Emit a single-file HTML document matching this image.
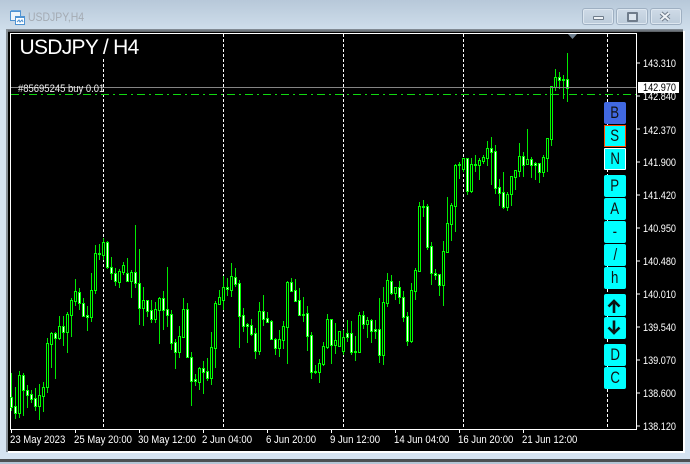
<!DOCTYPE html>
<html><head><meta charset="utf-8"><style>
html,body{margin:0;padding:0}
body{width:690px;height:464px;overflow:hidden;position:relative;background:#d5e3f1;font-family:"Liberation Sans",sans-serif}
div{position:absolute}
.top{left:0;top:0;width:690px;height:30px;background:linear-gradient(#b7c8d9,#cfdeeb)}
.tt{left:28px;top:10px;font-size:12px;line-height:14px;color:#a4abb3;white-space:nowrap;transform:scaleX(.87);transform-origin:left}
.wb{top:8px;height:15px;border:1px solid #9fb0c2;border-radius:3px;background:linear-gradient(#cfdbe7,#bccbda);box-shadow:inset 0 0 0 1px #dde7f0}
.blk{left:8px;top:32px;width:675px;height:419px;background:#000}
.b{left:604px;width:22px;height:22px;background:#0ff;border-radius:2px;color:#111;font-size:17px;line-height:22px;text-align:center;box-sizing:border-box}
.b span{display:inline-block;transform:scaleX(.78)}
.p{left:643px;color:#fff;font-size:11px;line-height:12px;white-space:nowrap;transform:scaleX(.83);transform-origin:left}
.d{top:434px;color:#fff;font-size:11px;line-height:12px;white-space:nowrap;transform:scaleX(.87);transform-origin:left}
svg{position:absolute;left:0;top:0}
</style></head><body>
<div class="top"></div>
<svg width="690" height="464" shape-rendering="crispEdges">
<path d="M11 10h10v3H11z" fill="#6aa5dc"/><path d="M10.5 11.5h10v9h-10z" fill="#eef5fb" stroke="#4f93d2"/>
<path d="M15.5 16.5h9v8h-9z" fill="#fff" stroke="#4f93d2"/><path d="M16 16h9v2h-9z" fill="#4f93d2"/>
<path d="M17 22l2-2 1 2 2-2 1 2" fill="none" stroke="#4f93d2" shape-rendering="auto"/>
</svg>
<div class="tt">USDJPY,H4</div>
<div class="wb" style="left:582px;width:30px"></div>
<div class="wb" style="left:616px;width:30px"></div>
<div class="wb" style="left:650px;width:30px"></div>
<div style="left:593px;top:16px;width:9px;height:2px;background:#eef2f6;border:1px solid #6f7c8b;border-radius:1px"></div>
<div style="left:627px;top:12px;width:7px;height:6px;background:#dce5ee;border:2px solid #6f7c8b;border-radius:1px;box-sizing:content-box"></div>
<svg width="690" height="30" style="z-index:2"><path d="M661 13l8 7M669 13l-8 7" stroke="#6f7c8b" stroke-width="4"/><path d="M661 13l8 7M669 13l-8 7" stroke="#eef2f6" stroke-width="2"/></svg>
<div style="left:6px;top:29px;width:677px;height:3px;background:linear-gradient(#8a949e,#55595e)"></div>
<div style="left:6px;top:29px;width:2px;height:423px;background:#858d95"></div>
<div style="left:8px;top:451px;width:677px;height:2px;background:#fff"></div>
<div style="left:683px;top:31px;width:2px;height:422px;background:#fff"></div>
<div style="left:0;top:459px;width:690px;height:3px;background:#4c4f52"></div>
<div style="left:0;top:462px;width:690px;height:2px;background:#b3c5d5"></div>
<div class="blk"></div>
<svg width="690" height="464" shape-rendering="crispEdges">
<path d="M10.5 33.5H636.5V429.5H10.5z" fill="none" stroke="#fff"/>
<path d="M103.5 59V429M223.5 34V429M343.5 34V429M463.5 34V429M607.5 34V429" stroke="#fff" stroke-dasharray="3 2" fill="none"/>
<path d="M637 63h3M637 96h3M637 129h3M637 162h3M637 195h3M637 228h3M637 261h3M637 294h3M637 327h3M637 360h3M637 393h3M637 426h3M11.500 430v3M75.500 430v3M139.500 430v3M203.500 430v3M267.500 430v3M331.500 430v3M395.500 430v3M459.500 430v3M523.500 430v3" stroke="#fff" fill="none"/>
<path fill="none" stroke="#00ea00" d="M11.500 373V411M15.500 387V419M19.500 371V418M23.500 373V416M27.500 385V408M31.500 390V403M35.500 388V411M39.500 384V420M43.500 382V412M47.500 338V393M51.500 332V368M55.500 332V379M59.500 316V340M63.500 316V346M67.500 312V353M71.500 298V337M75.500 279V306M79.500 288V310M83.500 298V316M87.500 306V331M91.500 273V322M95.500 245V294M99.500 244V260M103.500 238V260M107.500 241V269M111.500 257V280M115.500 268V286M119.500 269V288M123.500 262V275M127.500 258V282M131.500 270V298M135.500 225V288M139.500 249V325M143.500 287V326M147.500 300V317M151.500 300V323M155.500 302V323M159.500 297V344M163.500 291V330M167.500 267V327M171.500 310V350M175.500 339V369M179.500 326V358M183.500 298V337M187.500 303V358M191.500 352V406M195.500 374V386M199.500 367V390M203.500 361V394M207.500 358V381M211.500 332V385M215.500 301V368M219.500 290V305M223.500 276V310M227.500 278V296M231.500 263V297M235.500 268V287M239.500 280V348M243.500 308V332M247.500 323V343M251.500 319V336M255.500 328V359M259.500 302V355M263.500 295V326M267.500 312V322M271.500 320V340M275.500 338V355M279.500 330V357M283.500 321V349M287.500 281V364M291.500 278V292M295.500 279V302M299.500 288V316M303.500 297V322M307.500 306V351M311.500 332V379M315.500 365V374M319.500 359V383M323.500 342V366M327.500 314V349M331.500 319V364M335.500 323V354M339.500 331V346M343.500 330V355M347.500 320V342M351.500 321V355M355.500 336V361M359.500 312V353M363.500 311V329M367.500 317V338M371.500 319V343M375.500 320V339M379.500 298V363M383.500 287V365M387.500 273V307M391.500 275V295M395.500 287V300M399.500 281V304M403.500 291V322M407.500 312V346M411.500 283V343M415.500 268V300M419.500 202V271M423.500 200V217M427.500 204V250M431.500 242V285M435.500 269V280M439.500 274V296M443.500 241V306M447.500 197V253M451.500 203V241M455.500 164V232M459.500 162V179M463.500 158V172M467.500 158V195M471.500 158V193M475.500 155V172M479.500 158V180M483.500 155V164M487.500 141V166M491.500 137V185M495.500 145V194M499.500 179V206M503.500 172V209M507.500 192V211M511.500 176V206M515.500 170V190M519.500 143V177M523.500 152V177M527.500 129V164M531.500 157V178M535.500 162V180M539.500 163V183M543.500 155V177M547.500 138V172M551.500 86V146M555.500 69V91M559.500 72V89M563.500 75V99M567.500 53V102"/>
<path fill="#000" stroke="#00ff00" d="M18.500 375.500h2v38h-2zM38.500 395.500h2v11h-2zM42.500 387.500h2v9h-2zM46.500 343.500h2v44h-2zM50.500 333.500h2v11h-2zM58.500 326.500h2v12h-2zM66.500 314.500h2v18h-2zM70.500 300.500h2v15h-2zM74.500 291.500h2v10h-2zM90.500 290.500h2v27h-2zM94.500 253.500h2v37h-2zM102.500 242.500h2v13h-2zM118.500 271.500h2v11h-2zM122.500 265.500h2v7h-2zM130.500 272.500h2v9h-2zM142.500 300.500h2v8h-2zM154.500 309.500h2v10h-2zM158.500 298.500h2v12h-2zM178.500 336.500h2v16h-2zM182.500 309.500h2v28h-2zM198.500 368.500h2v14h-2zM210.500 347.500h2v31h-2zM214.500 303.500h2v45h-2zM218.500 297.500h2v7h-2zM222.500 287.500h2v13h-2zM230.500 276.500h2v14h-2zM258.500 311.500h2v40h-2zM278.500 339.500h2v9h-2zM282.500 326.500h2v14h-2zM286.500 282.500h2v45h-2zM318.500 363.500h2v9h-2zM322.500 346.500h2v18h-2zM326.500 319.500h2v28h-2zM334.500 340.500h2v5h-2zM338.500 331.500h2v15h-2zM342.500 337.500h2v14h-2zM358.500 315.500h2v37h-2zM366.500 320.500h2v4h-2zM382.500 302.500h2v53h-2zM386.500 280.500h2v23h-2zM394.500 287.500h2v6h-2zM410.500 290.500h2v51h-2zM414.500 270.500h2v21h-2zM418.500 206.500h2v65h-2zM442.500 251.500h2v34h-2zM446.500 223.500h2v29h-2zM450.500 205.500h2v19h-2zM454.500 165.500h2v41h-2zM462.500 158.500h2v11h-2zM470.500 164.500h2v27h-2zM478.500 160.500h2v5h-2zM482.500 157.500h2v4h-2zM486.500 148.500h2v10h-2zM506.500 194.500h2v13h-2zM510.500 176.500h2v18h-2zM514.500 170.500h2v7h-2zM518.500 156.500h2v15h-2zM526.500 159.500h2v5h-2zM542.500 157.500h2v15h-2zM546.500 138.500h2v20h-2zM550.500 86.500h2v53h-2zM554.500 77.500h2v10h-2z"/>
<path fill="#fff" stroke="#00ff00" d="M10.500 397.500h2v10h-2zM14.500 406.500h2v7h-2zM22.500 375.500h2v15h-2zM26.500 390.500h2v5h-2zM30.500 394.500h2v5h-2zM34.500 398.500h2v8h-2zM54.500 333.500h2v5h-2zM62.500 326.500h2v6h-2zM78.500 292.500h2v11h-2zM82.500 303.500h2v13h-2zM86.500 315.500h2v2h-2zM98.500 253.500h2v1h-2zM106.500 242.500h2v25h-2zM110.500 267.500h2v6h-2zM114.500 273.500h2v8h-2zM126.500 273.500h2v8h-2zM134.500 272.500h2v11h-2zM138.500 283.500h2v25h-2zM146.500 300.500h2v11h-2zM150.500 310.500h2v9h-2zM162.500 298.500h2v12h-2zM166.500 309.500h2v6h-2zM170.500 314.500h2v29h-2zM174.500 342.500h2v10h-2zM186.500 309.500h2v48h-2zM190.500 357.500h2v24h-2zM194.500 379.500h2v2h-2zM202.500 368.500h2v4h-2zM206.500 371.500h2v7h-2zM226.500 287.500h2v2h-2zM234.500 277.500h2v7h-2zM238.500 283.500h2v33h-2zM242.500 315.500h2v11h-2zM246.500 324.500h2v2h-2zM250.500 325.500h2v9h-2zM254.500 333.500h2v18h-2zM262.500 311.500h2v8h-2zM266.500 318.500h2v4h-2zM270.500 321.500h2v18h-2zM274.500 339.500h2v9h-2zM290.500 282.500h2v9h-2zM294.500 290.500h2v11h-2zM298.500 300.500h2v15h-2zM302.500 314.500h2v1h-2zM306.500 313.500h2v23h-2zM310.500 335.500h2v37h-2zM314.500 371.500h2v1h-2zM330.500 319.500h2v26h-2zM346.500 333.500h2v4h-2zM350.500 333.500h2v19h-2zM354.500 351.500h2v1h-2zM362.500 315.500h2v9h-2zM370.500 320.500h2v11h-2zM374.500 329.500h2v2h-2zM378.500 329.500h2v26h-2zM390.500 281.500h2v12h-2zM398.500 287.500h2v10h-2zM402.500 297.500h2v20h-2zM406.500 316.500h2v25h-2zM422.500 206.500h2v1h-2zM426.500 206.500h2v41h-2zM430.500 246.500h2v27h-2zM434.500 273.500h2v2h-2zM438.500 274.500h2v11h-2zM458.500 164.500h2v1h-2zM466.500 158.500h2v33h-2zM474.500 164.500h2v1h-2zM490.500 148.500h2v4h-2zM494.500 151.500h2v37h-2zM498.500 187.500h2v6h-2zM502.500 192.500h2v15h-2zM522.500 156.500h2v9h-2zM530.500 159.500h2v6h-2zM534.500 163.500h2v2h-2zM538.500 163.500h2v9h-2zM558.500 77.500h2v3h-2zM562.500 79.500h2v1h-2zM566.500 79.500h2v9h-2z"/>
<path d="M11 87.500H636" stroke="#858585" fill="none"/>
<path d="M11 94.500H636" stroke="#10d810" fill="none" stroke-dasharray="8 4 2 4"/>
<path d="M568 34h9l-4.500 5z" fill="#6f8090" shape-rendering="auto"/>
</svg>
<div style="left:19.500px;top:36px;color:#fff;font-size:21px;line-height:24px;letter-spacing:-.7px;white-space:nowrap">USDJPY / H4</div>
<div style="left:18px;top:83px;color:#eee;font-size:11px;line-height:12px;white-space:nowrap;transform:scaleX(.86);transform-origin:left">#85695245 buy 0.01</div>
<div class="p" style="top:58px">143.310</div>
<div class="p" style="top:91px">142.840</div>
<div class="p" style="top:125px">142.370</div>
<div class="p" style="top:157px">141.900</div>
<div class="p" style="top:190px">141.420</div>
<div class="p" style="top:223px">140.950</div>
<div class="p" style="top:256px">140.480</div>
<div class="p" style="top:289px">140.010</div>
<div class="p" style="top:322px">139.540</div>
<div class="p" style="top:355px">139.070</div>
<div class="p" style="top:388px">138.600</div>
<div class="p" style="top:421px">138.120</div>
<div style="left:638px;top:82px;width:41px;height:11px;background:#fff"></div>
<div class="p" style="top:82px;color:#000">142.970</div>
<div class="d" style="left:10px">23 May 2023</div>
<div class="d" style="left:74px">25 May 20:00</div>
<div class="d" style="left:138px">30 May 12:00</div>
<div class="d" style="left:202px">2 Jun 04:00</div>
<div class="d" style="left:266px">6 Jun 20:00</div>
<div class="d" style="left:330px">9 Jun 12:00</div>
<div class="d" style="left:394px">14 Jun 04:00</div>
<div class="d" style="left:458px">16 Jun 20:00</div>
<div class="d" style="left:522px">21 Jun 12:00</div>
<div class="b" style="top:102px;background:#4169e1"><span>B</span></div>
<div class="b" style="top:125px;border:1px solid #ff4500;line-height:20px;border-radius:0"><span>S</span></div>
<div class="b" style="top:148px;border:1px solid #fff;line-height:20px;border-radius:1px"><span>N</span></div>
<div class="b" style="top:175px"><span>P</span></div>
<div class="b" style="top:198px"><span>A</span></div>
<div class="b" style="top:221px"><span>-</span></div>
<div class="b" style="top:244px"><span>/</span></div>
<div class="b" style="top:267px"><span>h</span></div>
<div class="b" style="top:294px"></div>
<div class="b" style="top:317px"></div>
<div class="b" style="top:344px"><span>D</span></div>
<div class="b" style="top:367px"><span>C</span></div>
<svg width="690" height="464" style="z-index:3"><path d="M614 313V301M608.500 306.500L614 301L619.500 306.500M614 320.500V333M608.500 327.500L614 333L619.500 327.500" fill="none" stroke="#0a1414" stroke-width="2.600"/></svg>
</body></html>
